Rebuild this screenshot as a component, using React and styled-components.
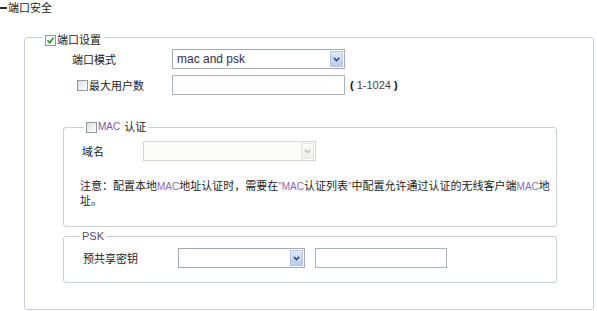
import React from 'react';
import styled, { createGlobalStyle } from 'styled-components';

const GlobalStyle = createGlobalStyle`
  html, body { margin: 0; padding: 0; background: #fff; }
  body {
    font-family: "Liberation Sans", "Noto Sans CJK SC", sans-serif;
    font-size: 11px;
    color: #1c1c1c;
  }
`;

const Page = styled.div`
  width: 597px;
  height: 311px;
  overflow: hidden;
`;

const Title = styled.div`
  display: flex;
  align-items: center;
  height: 16px;
  line-height: 16px;
`;

const Dash = styled.span`
  width: 7px;
  height: 2px;
  background: #2a2a2a;
  margin-right: 1px;
`;

const Group = styled.fieldset`
  box-sizing: border-box;
  width: ${p => p.$w}px;
  margin: ${p => p.$mt}px 0 0 ${p => p.$ml}px;
  padding: 0;
  min-inline-size: 0;
  border: 1px solid #c4d0e1;
  border-radius: 3px;
`;

const Legend = styled.legend`
  margin-left: ${p => p.$ml}px;
  padding: ${p => p.$pt || 0}px ${p => p.$px}px 0;
`;

const LegendInner = styled.div`
  display: flex;
  align-items: center;
  gap: 1px;
  height: 12px;
  line-height: 12px;
  white-space: nowrap;
`;

const Body = styled.div`
  padding: ${p => p.$pad};
`;

const Row = styled.div`
  display: flex;
  align-items: center;
  height: 20px;
  margin-top: ${p => p.$mt || 0}px;
  padding-left: ${p => p.$pl || 0}px;
`;

const Label = styled.span`
  display: flex;
  align-items: center;
  gap: 1px;
  flex: none;
  width: ${p => p.$w}px;
  white-space: nowrap;
`;

const BoxWrap = styled.span`
  box-sizing: border-box;
  flex: none;
  width: 11px;
  height: 11px;
  margin-left: ${p => p.$ml || 0}px;
  border: 1px solid #8d99a6;
  background: ${p => (p.$checked ? '#fff' : 'linear-gradient(135deg, #dedede, #ffffff)')};
  display: inline-flex;
  align-items: center;
  justify-content: center;
`;

function Checkbox({ checked, ml }) {
  return (
    <BoxWrap $checked={checked} $ml={ml}>
      {checked && (
        <svg width="9" height="9" viewBox="0 0 9 9">
          <path d="M1.5 4.3 L3.6 6.6 L7.6 1.8" fill="none" stroke="#2f9a2f" strokeWidth="1.7" />
        </svg>
      )}
    </BoxWrap>
  );
}

const SelectBox = styled.div`
  box-sizing: border-box;
  flex: none;
  width: ${p => p.$w}px;
  height: 20px;
  border: 1px solid ${p => (p.$disabled ? '#d8d8d0' : '#a2abb8')};
  background: ${p => (p.$disabled ? '#fbfbf9' : '#fff')};
  display: flex;
  align-items: stretch;
`;

const SelectValue = styled.span`
  flex: 1;
  display: flex;
  align-items: center;
  padding-left: 4px;
  font-family: "Liberation Sans", sans-serif;
  font-size: 12px;
  color: #3a2a52;
`;

const ArrowBtn = styled.span`
  box-sizing: border-box;
  width: 13px;
  margin: 1px;
  border: 1px solid ${p => (p.$disabled ? '#e4e4e0' : '#b4c6ec')};
  background: ${p =>
    p.$disabled
      ? 'linear-gradient(#fafafa, #eeeeec)'
      : 'linear-gradient(#dfe8fb, #b9cbf1)'};
  display: flex;
  align-items: center;
  justify-content: center;
`;

function Select({ w, value, disabled }) {
  return (
    <SelectBox $w={w} $disabled={disabled}>
      <SelectValue>{value}</SelectValue>
      <ArrowBtn $disabled={disabled}>
        <svg width="7" height="5" viewBox="0 0 7 5">
          <path
            d="M0.8 0.9 L3.5 3.6 L6.2 0.9"
            fill="none"
            stroke={disabled ? '#c4c4c0' : '#3b4b7c'}
            strokeWidth="1.6"
          />
        </svg>
      </ArrowBtn>
    </SelectBox>
  );
}

const TextInput = styled.div`
  box-sizing: border-box;
  flex: none;
  width: ${p => p.$w}px;
  height: 20px;
  margin-left: ${p => p.$ml || 0}px;
  border: 1px solid #a6b4c6;
  background: #fff;
`;

const Hint = styled.span`
  margin-left: 2px;
  white-space: nowrap;
  color: #4a3c5c;
`;

const Paren = styled.b`
  color: #111;
  margin: 0 3px;
`;

const Mac = styled.span`
  color: ${p => p.$c || '#9068b0'};
  font-size: 10px;
`;

const Note = styled.div`
  margin-top: 18px;
  line-height: 14px;
  white-space: nowrap;
`;

const PskText = styled.span`
  color: #5a4a6c;
`;

export default function App() {
  return (
    <Page>
      <GlobalStyle />
      <Title>
        <Dash />
        端口安全
      </Title>

      <Group $w={570} $mt={13} $ml={24}>
        <Legend $ml={17} $px={3} $pt={5}>
          <LegendInner>
            <Checkbox checked />
            端口设置
          </LegendInner>
        </Legend>
        <Body $pad="3px 0 26px 0">
          <Row $pl={47}>
            <Label $w={100}>端口模式</Label>
            <Select w={173} value="mac and psk" />
          </Row>
          <Row $pl={47} $mt={6}>
            <Label $w={100}>
              <Checkbox ml={5} />
              最大用户数
            </Label>
            <TextInput $w={173} />
            <Hint>
              <Paren>(</Paren>1-1024<Paren>)</Paren>
            </Hint>
          </Row>

          <Group $w={494} $mt={26} $ml={38}>
            <Legend $ml={20} $px={2}>
              <LegendInner>
                <Checkbox />
                <Mac $c="#7a5a9c">MAC</Mac>&nbsp;认证
              </LegendInner>
            </Legend>
            <Body $pad="8px 0 18px 16px">
              <Row $pl={2}>
                <Label $w={61}>域名</Label>
                <Select w={173} value="" disabled />
              </Row>
              <Note>
                注意：配置本地<Mac>MAC</Mac>地址认证时，需要在<Mac>"MAC</Mac>认证列表<Mac>"</Mac>中配置允许通过认证的无线客户端<Mac>MAC</Mac>地
                <br />
                址。
              </Note>
            </Body>
          </Group>

          <Group $w={494} $mt={3} $ml={38}>
            <Legend $ml={16} $px={2}>
              <LegendInner>
                <PskText>PSK</PskText>
              </LegendInner>
            </Legend>
            <Body $pad="6px 0 14px 0">
              <Row $pl={19}>
                <Label $w={95}>预共享密钥</Label>
                <Select w={127} value="" />
                <TextInput $w={132} $ml={10} />
              </Row>
            </Body>
          </Group>
        </Body>
      </Group>
    </Page>
  );
}
